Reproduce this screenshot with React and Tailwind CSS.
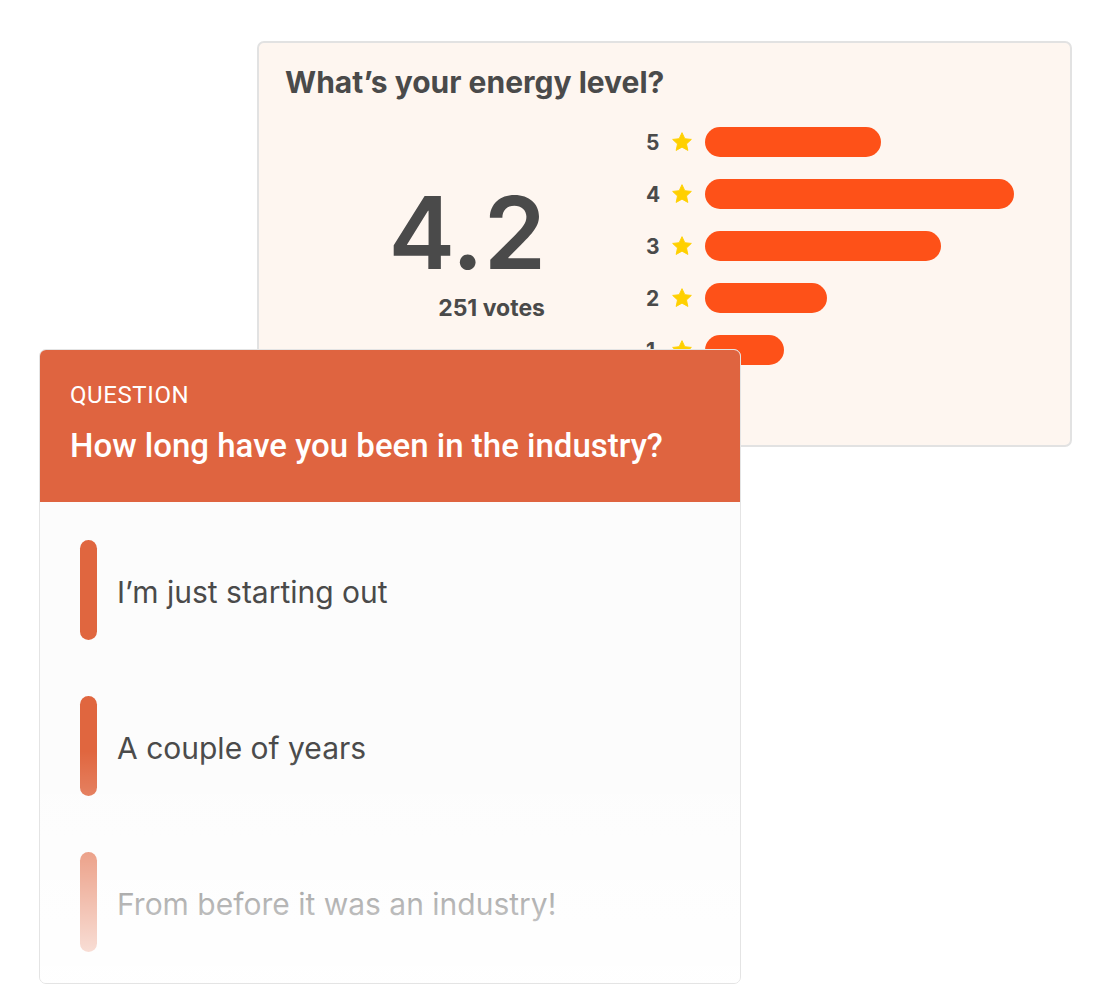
const bars = [
  { n: 5, w: 176 },
  { n: 4, w: 309 },
  { n: 3, w: 236 },
  { n: 2, w: 122 },
  { n: 1, w: 79 },
];

const options = ["I’m just starting out", "A couple of years", "From before it was an industry!"];

function Star() {
  return (
    <svg width="22" height="22" viewBox="0 0 24 24" className="shrink-0">
      <path
        d="M12 1.8l3.1 6.6 7.1.8-5.3 4.9 1.5 7.1L12 17.6l-6.4 3.6 1.5-7.1-5.3-4.9 7.1-.8z"
        fill="#ffd000"
        stroke="#ffd000"
        strokeLinejoin="round"
        strokeWidth="1"
      />
    </svg>
  );
}

export default function App() {
  return (
    <div className="relative w-[1112px] h-[984px] bg-white overflow-hidden font-['Inter',sans-serif]">
      {/* Rating card */}
      <div className="ml-[257px] pt-[41px]">
        <div className="w-[815px] h-[406px] rounded-[7px] border-2 border-[#e2e2e2] bg-[#fef6f0] px-[26px] pt-[21px]">
          <h2 className="text-[30px] leading-[36px] font-bold text-[#4a4a4a]">
            What’s your energy level?
          </h2>
          <div className="flex mt-[16px]">
            <div className="w-[260px] flex flex-col items-end pt-[67px]">
              <div className="text-[100px] leading-none font-semibold text-[#4a4a4a] mr-[-1px]">4.2</div>
              <div className="mt-[11px] text-[23px] leading-[28px] font-bold text-[#4a4a4a]">251 votes</div>
            </div>
            <div className="ml-[101px] flex flex-col">
              {bars.map((b) => (
                <div key={b.n} className="flex items-center h-[52px]">
                  <span className="w-[16px] text-[21px] font-bold text-[#4a4a4a] leading-none">{b.n}</span>
                  <span className="ml-[9px]"><Star /></span>
                  <div className="ml-[12px] h-[30px] rounded-full bg-[#fe5118]" style={{ width: b.w }} />
                </div>
              ))}
            </div>
          </div>
        </div>
      </div>

      {/* Question card */}
      <div className="relative z-10 ml-[39px] mt-[-98px] w-[702px] h-[635px] rounded-[7px] border border-[#e4e4e4] bg-[#fcfcfc] overflow-hidden">
        <div className="h-[152px] bg-[#df6440] px-[30px] pt-[31px] font-['Roboto',sans-serif] text-white">
          <div className="text-[24px] leading-[28px] uppercase tracking-[0.6px]">Question</div>
          <div className="mt-[18px] text-[33px] leading-[38px] font-medium">How long have you been in the industry?</div>
        </div>
        <div className="flex flex-col gap-[56px] pt-[38px] pl-[40px]">
          {options.map((o) => (
            <div key={o} className="flex items-center h-[100px]">
              <div className="w-[17px] h-[100px] rounded-full bg-[#e0663f]" />
              <span className="ml-[20px] text-[30px] leading-[36px] text-[#4a4a4a] font-['Inter',sans-serif] pt-[4px]">{o}</span>
            </div>
          ))}
        </div>
        <div className="absolute inset-x-0 bottom-0 h-[232px] bg-gradient-to-b from-white/0 to-white/90 pointer-events-none" />
      </div>
    </div>
  );
}
